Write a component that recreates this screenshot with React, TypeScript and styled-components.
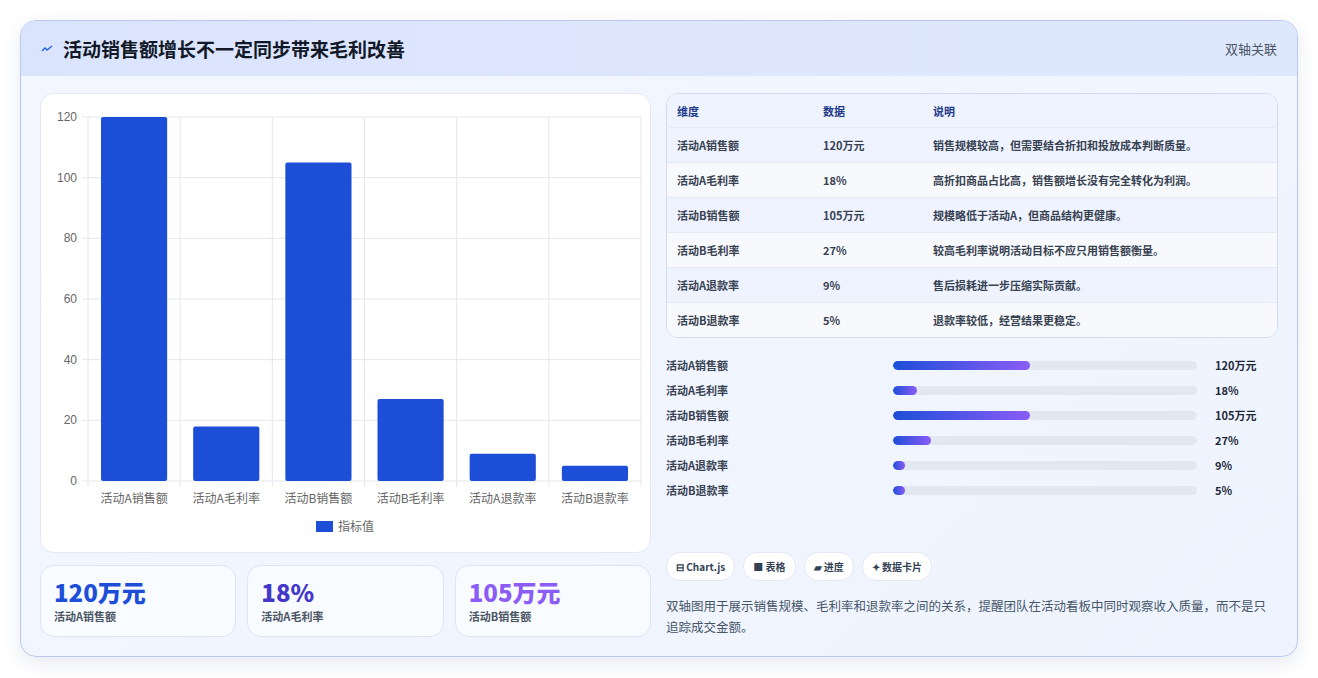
import styled, { createGlobalStyle } from 'styled-components';

const Global = createGlobalStyle`
  body { margin: 0; background: #ffffff; font-family: "Noto Sans CJK SC", "Noto Sans", sans-serif; }
`;

const Page = styled.div`
  padding: 20px 20px 20px 20px;
`;

const Panel = styled.div`
  border: 1px solid #b9c8f0;
  border-radius: 16px;
  background: linear-gradient(135deg, #f3f6ff 0%, #eef4ff 100%);
  box-shadow: 0 6px 18px rgba(60, 80, 140, 0.12);
  overflow: hidden;
`;

const Header = styled.div`
  height: 55px;
  display: flex;
  align-items: center;
  justify-content: space-between;
  padding: 0 20px;
  background: linear-gradient(90deg, #dbe4fd, #dee8fd);
`;

const Title = styled.h1`
  margin: 0;
  font-size: 19px;
  font-weight: 700;
  color: #111827;
  display: flex;
  align-items: center;
  gap: 10px;
`;

const Tag = styled.span`
  font-size: 13px;
  color: #4b5563;
`;

const Body = styled.div`
  display: grid;
  grid-template-columns: 611px 612px;
  gap: 15px;
  padding: 17px 19px 19px 19px;
`;

const Col = styled.div`
  display: flex;
  flex-direction: column;
  gap: 12px;
`;

const ChartCard = styled.div`
  height: 460px;
  background: #fff;
  border: 1px solid #e3e8f2;
  border-radius: 14px;
  box-sizing: border-box;
`;

const Stats = styled.div`
  display: grid;
  grid-template-columns: repeat(3, 1fr);
  gap: 11px;
`;

const Stat = styled.div`
  height: 72px;
  box-sizing: border-box;
  background: #f8fbff;
  border: 1px solid #dde5f3;
  border-radius: 14px;
  padding: 10px 13px;
`;

const StatValue = styled.div<{ $c: string }>`
  font-size: 24px;
  font-weight: 800;
  color: ${(p) => p.$c};
  line-height: 32px;
`;

const StatLabel = styled.div`
  font-size: 11px;
  color: #4b5563;
  font-weight: 600;
`;

const Table = styled.div`
  border: 1px solid #d3dcee;
  border-radius: 12px;
  overflow: hidden;
  background: #fff;
`;

const Row = styled.div<{ $head?: boolean; $alt?: boolean }>`
  display: grid;
  grid-template-columns: 146px 110px 1fr;
  padding: 0 10px;
  height: ${(p) => (p.$head ? 33 : 35)}px;
  align-items: center;
  font-size: 11px;
  font-weight: ${(p) => (p.$head ? 700 : 600)};
  color: ${(p) => (p.$head ? '#1e3a8a' : '#374151')};
  background: ${(p) => (p.$head ? '#eef3ff' : p.$alt ? '#f7f9fc' : '#eef3ff')};
  border-top: ${(p) => (p.$head ? 'none' : '1px solid #e5eaf3')};
  box-sizing: border-box;
`;

const Bars = styled.div`
  display: flex;
  flex-direction: column;
  gap: 11px;
  margin-top: 7px;
`;

const BarRow = styled.div`
  display: grid;
  grid-template-columns: 227px 313px 1fr;
  gap: 0;
  align-items: center;
  font-size: 11px;
  font-weight: 700;
  color: #374151;
  height: 14px;
`;

const Track = styled.div`
  height: 9px;
  background: #e2e8f0;
  border-radius: 5px;
  margin-right: 9px;
  overflow: hidden;
`;

const Fill = styled.div`
  height: 100%;
  border-radius: 5px;
  background: linear-gradient(90deg, #1d4ed8, #8b5cf6);
`;

const BarVal = styled.span`
  margin-left: 9px;
  color: #1f2937;
`;

const Chips = styled.div`
  display: flex;
  gap: 8px;
  margin-top: auto;
`;

const Chip = styled.span`
  height: 27px;
  padding: 0 9px;
  display: inline-flex;
  align-items: center;
  border-radius: 14px;
  background: #fff;
  border: 1px solid #e3e8f2;
  font-size: 10px;
  font-weight: 700;
  color: #334155;
`;

const Desc = styled.p`
  margin: 2px 0 0;
  font-size: 12.5px;
  line-height: 21px;
  color: #475569;
`;

const labels = ['活动A销售额', '活动A毛利率', '活动B销售额', '活动B毛利率', '活动A退款率', '活动B退款率'];
const values = [120, 18, 105, 27, 9, 5];
const vals = ['120万元', '18%', '105万元', '27%', '9%', '5%'];
const widths = [45, 8, 45, 12.5, 4, 4];
const notes = [
  '销售规模较高，但需要结合折扣和投放成本判断质量。',
  '高折扣商品占比高，销售额增长没有完全转化为利润。',
  '规模略低于活动A，但商品结构更健康。',
  '较高毛利率说明活动目标不应只用销售额衡量。',
  '售后损耗进一步压缩实际贡献。',
  '退款率较低，经营结果更稳定。',
];

function Chart() {
  const x0 = 47, x1 = 600, y0 = 23, y1 = 387;
  const cw = (x1 - x0) / 6;
  const yScale = (v: number) => y1 - (v / 120) * (y1 - y0);
  return (
    <svg width="611" height="460" style={{ display: 'block' }}>
      {[0, 20, 40, 60, 80, 100, 120].map((t) => (
        <g key={t}>
          <line x1={x0 - 6} x2={x1} y1={yScale(t)} y2={yScale(t)} stroke="#e5e7eb" />
          <text x={x0 - 11} y={yScale(t) + 4} fontSize="12" fill="#666" textAnchor="end" fontFamily="Liberation Sans, sans-serif">{t}</text>
        </g>
      ))}
      {Array.from({ length: 7 }).map((_, i) => (
        <line key={i} x1={x0 + i * cw} x2={x0 + i * cw} y1={y0} y2={y1 + 6} stroke="#e5e7eb" />
      ))}
      {values.map((v, i) => (
        <g key={i}>
          <rect x={x0 + i * cw + 13} y={yScale(v)} width={cw - 26} height={y1 - yScale(v)} rx="2" fill="#1d4ed8" />
          <text x={x0 + i * cw + cw / 2} y={409} fontSize="12" fill="#666" textAnchor="middle">{labels[i]}</text>
        </g>
      ))}
      <rect x={275} y={427} width={17} height={11} fill="#1d4ed8" />
      <text x={297} y={437} fontSize="12" fill="#666">指标值</text>
    </svg>
  );
}

export default function App() {
  return (
    <Page>
      <Global />
      <Panel>
        <Header>
          <Title>
            <svg width="12" height="8" viewBox="0 0 12 8"><path d="M1 6 L4 3 L6 5 L11 1" stroke="#2563eb" strokeWidth="1.5" fill="none" /></svg>
            活动销售额增长不一定同步带来毛利改善
          </Title>
          <Tag>双轴关联</Tag>
        </Header>
        <Body>
          <Col>
            <ChartCard><Chart /></ChartCard>
            <Stats>
              <Stat><StatValue $c="#1d4ed8">120万元</StatValue><StatLabel>活动A销售额</StatLabel></Stat>
              <Stat><StatValue $c="#4338ca">18%</StatValue><StatLabel>活动A毛利率</StatLabel></Stat>
              <Stat><StatValue $c="#8b5cf6">105万元</StatValue><StatLabel>活动B销售额</StatLabel></Stat>
            </Stats>
          </Col>
          <Col>
            <Table>
              <Row $head><span>维度</span><span>数据</span><span>说明</span></Row>
              {labels.map((l, i) => (
                <Row key={l} $alt={i % 2 === 1}><span>{l}</span><span>{vals[i]}</span><span>{notes[i]}</span></Row>
              ))}
            </Table>
            <Bars>
              {labels.map((l, i) => (
                <BarRow key={l}>
                  <span>{l}</span>
                  <Track><Fill style={{ width: `${widths[i]}%` }} /></Track>
                  <BarVal>{vals[i]}</BarVal>
                </BarRow>
              ))}
            </Bars>
            <Chips>
              <Chip>⊟ Chart.js</Chip>
              <Chip>■ 表格</Chip>
              <Chip>▰ 进度</Chip>
              <Chip>✦ 数据卡片</Chip>
            </Chips>
            <Desc>双轴图用于展示销售规模、毛利率和退款率之间的关系，提醒团队在活动看板中同时观察收入质量，而不是只追踪成交金额。</Desc>
          </Col>
        </Body>
      </Panel>
    </Page>
  );
}
